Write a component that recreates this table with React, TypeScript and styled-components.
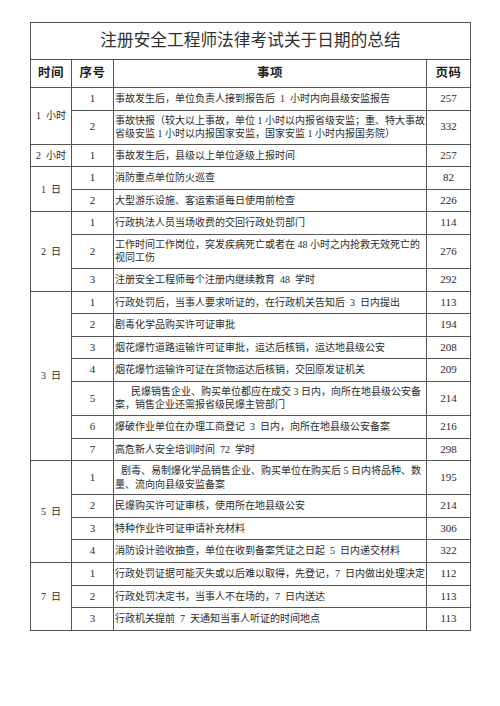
import React from "react";
import styled, { createGlobalStyle } from "styled-components";

const Global = createGlobalStyle`
  html, body { margin: 0; padding: 0; background: #ffffff; }
  body { font-family: "Liberation Serif", "Noto Sans CJK SC", serif; color: #2b2b2b; }
`;

const Page = styled.div`
  width: 500px;
  height: 706px;
  box-sizing: border-box;
  padding: 22px 30px 0 30px;
`;

const Table = styled.table`
  width: 440px;
  border-collapse: collapse;
  table-layout: fixed;
  border: 1px solid #4a4a4a;
`;

const Cell = styled.td`
  border: 1px solid #555555;
  padding: 0;
  font-size: 10px;
  line-height: 13.5px;
  vertical-align: middle;
`;

const TitleCell = styled(Cell)`
  height: 36px;
  text-align: center;
  font-size: 16.6px;
  line-height: 20px;
  color: #303030;
  letter-spacing: 0.1px;
`;

const HeadCell = styled(Cell)`
  height: 27px;
  text-align: center;
  font-size: 12.5px;
  font-weight: 700;
  color: #222222;
  letter-spacing: 0.5px;
`;

const TimeCell = styled(Cell)`
  text-align: center;
  font-size: 10px;
`;

const NumCell = styled(Cell)<{ $tall?: boolean }>`
  height: ${(p) => (p.$tall ? "33px" : "21.6px")};
  text-align: center;
  font-size: 11px;
`;

const ItemCell = styled(Cell)<{ $indent?: number }>`
  text-align: left;
  padding-left: 1px;
  white-space: nowrap;
  overflow: hidden;
`;

const Line = styled.span<{ $indent?: number }>`
  display: block;
  text-indent: ${(p) => p.$indent ?? 0}px;
`;

const PageCell = styled(Cell)`
  text-align: center;
  font-size: 11px;
`;

type Row = { text: string[]; page: number; indent?: number; tight?: boolean };
type Group = { time: string; rows: Row[] };

const wide = (s: string) => s.replace(/ /g, "\u2002");

const groups: Group[] = [
  {
    time: "1 小时",
    rows: [
      { text: ["事故发生后，单位负责人接到报告后 1 小时内向县级安监报告"], page: 257 },
      {
        text: [
          "事故快报（较大以上事故，单位 1 小时以内报省级安监；重、特大事故",
          "省级安监 1 小时以内报国家安监，国家安监 1 小时内报国务院）",
        ],
        page: 332,
        tight: true,
      },
    ],
  },
  {
    time: "2 小时",
    rows: [{ text: ["事故发生后，县级以上单位逐级上报时间"], page: 257 }],
  },
  {
    time: "1 日",
    rows: [
      { text: ["消防重点单位防火巡查"], page: 82 },
      { text: ["大型游乐设施、客运索道每日使用前检查"], page: 226 },
    ],
  },
  {
    time: "2 日",
    rows: [
      { text: ["行政执法人员当场收费的交回行政处罚部门"], page: 114 },
      {
        text: ["工作时间工作岗位，突发疾病死亡或者在 48 小时之内抢救无效死亡的", "视同工伤"],
        page: 276,
        tight: true,
      },
      { text: ["注册安全工程师每个注册内继续教育 48 学时"], page: 292 },
    ],
  },
  {
    time: "3 日",
    rows: [
      { text: ["行政处罚后，当事人要求听证的，在行政机关告知后 3 日内提出"], page: 113 },
      { text: ["剧毒化学品购买许可证审批"], page: 194 },
      { text: ["烟花爆竹道路运输许可证审批，运达后核销，运达地县级公安"], page: 208 },
      { text: ["烟花爆竹运输许可证在货物运达后核销，交回原发证机关"], page: 209 },
      {
        text: ["民爆销售企业、购买单位都应在成交 3 日内，向所在地县级公安备", "案，销售企业还需报省级民爆主管部门"],
        page: 214,
        indent: 16,
        tight: true,
      },
      { text: ["爆破作业单位在办理工商登记 3 日内，向所在地县级公安备案"], page: 216 },
      { text: ["高危新人安全培训时间 72 学时"], page: 298 },
    ],
  },
  {
    time: "5 日",
    rows: [
      {
        text: ["剧毒、易制爆化学品销售企业、购买单位在购买后 5 日内将品种、数", "量、流向向县级安监备案"],
        page: 195,
        indent: 6,
        tight: true,
      },
      { text: ["民爆购买许可证审核，使用所在地县级公安"], page: 214 },
      { text: ["特种作业许可证申请补充材料"], page: 306 },
      { text: ["消防设计验收抽查，单位在收到备案凭证之日起 5 日内递交材料"], page: 322 },
    ],
  },
  {
    time: "7 日",
    rows: [
      { text: ["行政处罚证据可能灭失或以后难以取得，先登记，7 日内做出处理决定"], page: 112 },
      { text: ["行政处罚决定书，当事人不在场的，7 日内送达"], page: 113 },
      { text: ["行政机关提前 7 天通知当事人听证的时间地点"], page: 113 },
    ],
  },
];

export default function App() {
  return (
    <>
      <Global />
      <Page>
        <Table>
          <colgroup>
            <col style={{ width: 41 }} />
            <col style={{ width: 42 }} />
            <col style={{ width: 313 }} />
            <col style={{ width: 44 }} />
          </colgroup>
          <tbody>
            <tr>
              <TitleCell colSpan={4}>注册安全工程师法律考试关于日期的总结</TitleCell>
            </tr>
            <tr>
              <HeadCell>时间</HeadCell>
              <HeadCell>序号</HeadCell>
              <HeadCell>事项</HeadCell>
              <HeadCell>页码</HeadCell>
            </tr>
            {groups.map((g) =>
              g.rows.map((r, i) => (
                <tr key={g.time + i}>
                  {i === 0 && <TimeCell rowSpan={g.rows.length}>{wide(g.time)}</TimeCell>}
                  <NumCell $tall={r.text.length > 1}>{i + 1}</NumCell>
                  <ItemCell>
                    {r.text.map((t, k) => (
                      <Line key={k} $indent={k === 0 ? r.indent : 0}>
                        {r.tight ? t : wide(t)}
                      </Line>
                    ))}
                  </ItemCell>
                  <PageCell>{r.page}</PageCell>
                </tr>
              ))
            )}
          </tbody>
        </Table>
      </Page>
    </>
  );
}
